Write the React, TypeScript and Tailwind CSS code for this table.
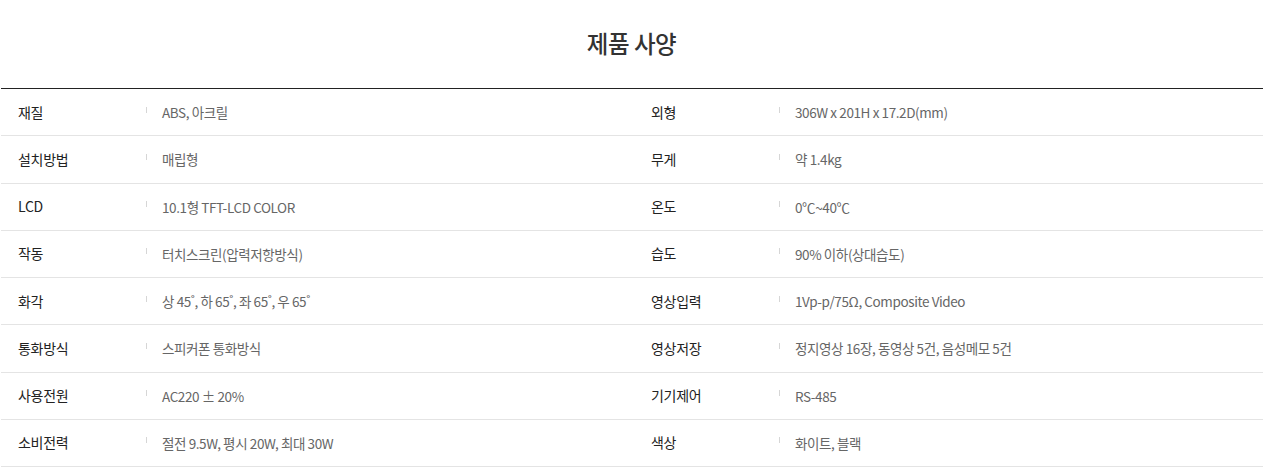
import React from "react";

interface SpecItem {
  label: string
  value: string
}

const leftSpecs: SpecItem[] = [
  { label: "재질", value: "ABS, 아크릴" },
  { label: "설치방법", value: "매립형" },
  { label: "LCD", value: "10.1형 TFT-LCD COLOR" },
  { label: "작동", value: "터치스크린(압력저항방식)" },
  { label: "화각", value: "상 45˚, 하 65˚, 좌 65˚, 우 65˚" },
  { label: "통화방식", value: "스피커폰 통화방식" },
  { label: "사용전원", value: "AC220 ± 20%" },
  { label: "소비전력", value: "절전 9.5W, 평시 20W, 최대 30W" },
];

const rightSpecs: SpecItem[] = [
  { label: "외형", value: "306W x 201H x 17.2D(mm)" },
  { label: "무게", value: "약 1.4kg" },
  { label: "온도", value: "0℃~40℃" },
  { label: "습도", value: "90% 이하(상대습도)" },
  { label: "영상입력", value: "1Vp-p/75Ω, Composite Video" },
  { label: "영상저장", value: "정지영상 16장, 동영상 5건, 음성메모 5건" },
  { label: "기기제어", value: "RS-485" },
  { label: "색상", value: "화이트, 블랙" },
];

const SpecRow = ({ item }: { item: SpecItem }) => {
  return (
    <div className="flex items-center h-[47.25px] border-b border-[#e4e4e4]">
      <div className="w-[145px] pl-[17px] text-[14px] text-[#222] tracking-[-0.3px]">{item.label}</div>
      <span className="w-px h-[6px] bg-[#d6d6d6] mt-[-5px]" />
      <div className="pl-[15px] text-[13.5px] text-[#666] tracking-[-0.4px]">{item.value}</div>
    </div>
  );
}

const App = () => {
  return (
    <div
      className="w-full bg-white"
      style={{ fontFamily: '"Noto Sans CJK KR", "Noto Sans", sans-serif' }}
    >
      <h2 className="h-[88px] pt-[26px] text-center text-[23.5px] font-medium text-[#333] tracking-[-0.5px] leading-[34px]">
        제품 사양
      </h2>
      <div className="ml-px grid grid-cols-[633px_1fr] border-t border-[#222]">
        <div className="flex flex-col">
          {leftSpecs.map((item, index) => (
            <SpecRow key={index} item={item} />
          ))}
        </div>
        <div className="flex flex-col">
          {rightSpecs.map((item, index) => (
            <SpecRow key={index} item={item} />
          ))}
        </div>
      </div>
    </div>
  );
}
export default App;
